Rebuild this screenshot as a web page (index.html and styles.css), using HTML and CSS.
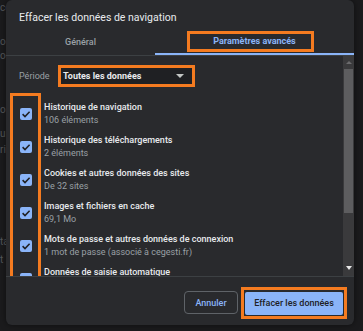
FILE: index.html
```html
<!DOCTYPE html>
<html lang="fr">

<head>
    <meta charset="UTF-8">
    <meta name="viewport" content="width=device-width, initial-scale=1.0">
    <title>Effacer les données de navigation</title>
    <link rel="stylesheet" href="styles.css">
</head>

<body>
    <div class="page">
        <!-- settings page behind the dialog -->
        <div class="behind">
            <p class="behind-line l1">cc</p>
            <p class="behind-line l2">oc</p>
            <p class="behind-line l3">oc</p>
            <p class="behind-line l4">ok</p>
            <p class="behind-line l5">u</p>
            <p class="behind-line l6">rio</p>
            <p class="behind-line l7">ta</p>
            <p class="behind-line l8">t</p>
        </div>

        <div class="dialog">
            <h1 class="dialog-title">Effacer les données de navigation</h1>

            <div class="tabs">
                <div class="tab tab-basic">Général</div>
                <div class="tab tab-advanced active">
                    <span class="highlight tab-mark">Paramètres avancés</span>
                </div>
            </div>

            <div class="dialog-body">
                <div class="scroll-area">
                    <div class="period">
                        <span class="period-label">Période</span>
                        <div class="highlight select-box">
                            <span>Toutes les données</span>
                            <span class="select-arrow"></span>
                        </div>
                    </div>

                    <div class="options">
                        <div class="highlight checks">
                            <div class="check-cell"><span class="checkbox"><svg viewBox="0 0 12 12"><path d="M2.6 6.2 L5 8.5 L9.6 3.8" /></svg></span></div>
                            <div class="check-cell"><span class="checkbox"><svg viewBox="0 0 12 12"><path d="M2.6 6.2 L5 8.5 L9.6 3.8" /></svg></span></div>
                            <div class="check-cell"><span class="checkbox"><svg viewBox="0 0 12 12"><path d="M2.6 6.2 L5 8.5 L9.6 3.8" /></svg></span></div>
                            <div class="check-cell"><span class="checkbox"><svg viewBox="0 0 12 12"><path d="M2.6 6.2 L5 8.5 L9.6 3.8" /></svg></span></div>
                            <div class="check-cell"><span class="checkbox"><svg viewBox="0 0 12 12"><path d="M2.6 6.2 L5 8.5 L9.6 3.8" /></svg></span></div>
                            <div class="check-cell"><span class="checkbox"><svg viewBox="0 0 12 12"><path d="M2.6 6.2 L5 8.5 L9.6 3.8" /></svg></span></div>
                        </div>

                        <div class="labels">
                            <div class="option">
                                <p class="option-title">Historique de navigation</p>
                                <p class="option-sub">106 éléments</p>
                            </div>
                            <div class="option">
                                <p class="option-title">Historique des téléchargements</p>
                                <p class="option-sub">2 éléments</p>
                            </div>
                            <div class="option">
                                <p class="option-title">Cookies et autres données des sites</p>
                                <p class="option-sub">De 32 sites</p>
                            </div>
                            <div class="option">
                                <p class="option-title">Images et fichiers en cache</p>
                                <p class="option-sub">69,1 Mo</p>
                            </div>
                            <div class="option">
                                <p class="option-title">Mots de passe et autres données de connexion</p>
                                <p class="option-sub">1 mot de passe (associé à cegesti.fr)</p>
                            </div>
                            <div class="option">
                                <p class="option-title">Données de saisie automatique</p>
                            </div>
                        </div>
                    </div>
                </div>

                <div class="scrollbar">
                    <span class="arrow arrow-up"></span>
                    <div class="track">
                        <div class="thumb"></div>
                    </div>
                    <span class="arrow arrow-down"></span>
                </div>
            </div>

            <div class="dialog-footer">
                <button class="cancel-btn">Annuler</button>
                <div class="highlight confirm-wrap">
                    <button class="confirm-btn">Effacer les données</button>
                </div>
            </div>
        </div>
    </div>
</body>

</html>
```

FILE: styles.css
```css
/* Reset */
* {
    margin: 0;
    padding: 0;
    box-sizing: border-box;
}

body {
    font-family: 'Roboto', 'Liberation Sans', sans-serif;
    background-color: #1b1b1d;
    color: #e8eaed;
    width: 363px;
    height: 331px;
    overflow: hidden;
}

.page {
    position: relative;
    width: 363px;
    height: 331px;
}

/* Faint settings page behind */
.behind {
    display: flex;
    flex-direction: column;
}

.behind-line {
    font-size: 10px;
    line-height: 12px;
    color: #55575a;
    white-space: nowrap;
}

.l1 { margin-top: 2px; }
.l2 { margin-top: 22px; }
.l3 { margin-top: 2px; }
.l4 { margin-top: 42px; }
.l5 { margin-top: 12px; }
.l6 { margin-top: 4px; }
.l7 { margin-top: 80px; }
.l8 { margin-top: 6px; }

/* Orange annotation frames */
.highlight {
    border: 3px solid #f47b20;
}

/* Dialog */
.dialog {
    position: absolute;
    top: 0;
    left: 6px;
    width: 348px;
    height: 325px;
    background-color: #292a2d;
    border-radius: 6px;
    display: flex;
    flex-direction: column;
    overflow: hidden;
    box-shadow: 0 0 6px rgba(0, 0, 0, 0.5);
}

.dialog-title {
    font-size: 10.5px;
    font-weight: normal;
    line-height: 16px;
    padding: 10px 13px 0;
    height: 25px;
    color: #e8eaed;
}

/* Tabs */
.tabs {
    display: flex;
    height: 31px;
    border-bottom: 1px solid #3c4043;
}

.tab {
    display: flex;
    justify-content: center;
    align-items: flex-start;
    padding-top: 6px;
    font-size: 9px;
    font-weight: 500;
    line-height: 15px;
    color: #9aa0a6;
}

.tab-basic {
    width: 149px;
    padding-top: 10px;
}

.tab-advanced {
    flex: 1;
    border-bottom: 2px solid #8ab4f8;
}

.tab.active {
    color: #8ab4f8;
    font-weight: bold;
}

.tab-mark {
    height: 21px;
    padding: 0 15px 0 23px;
    margin-right: 8px;
}

/* Body */
.dialog-body {
    display: flex;
    height: 221px;
    border-bottom: 1px solid #3c4043;
}

.scroll-area {
    flex: 1;
    overflow: hidden;
}

.period {
    display: flex;
    align-items: center;
    padding: 9px 0 0 13px;
}

.period-label {
    font-size: 9px;
    color: #9aa0a6;
    width: 39px;
}

.select-box {
    width: 137px;
    height: 22px;
    background-color: #1f2023;
    display: flex;
    align-items: center;
    justify-content: space-between;
    padding: 0 8px 0 2px;
    font-size: 9px;
    font-weight: bold;
    color: #e8eaed;
}

.select-arrow {
    width: 0;
    height: 0;
    border-left: 4px solid transparent;
    border-right: 4px solid transparent;
    border-top: 4px solid #c4c7c5;
}

/* Options */
.options {
    display: flex;
    margin-top: 6px;
}

.checks {
    margin-left: 4px;
    width: 31px;
    height: 190px;
    padding-top: 1px;
    display: flex;
    flex-direction: column;
    align-items: center;
}

.check-cell {
    height: 33px;
    flex-shrink: 0;
    display: flex;
    align-items: center;
    justify-content: center;
}

.checkbox {
    width: 12px;
    height: 12px;
    border-radius: 2px;
    background-color: #8ab4f8;
    display: flex;
}

.checkbox svg {
    width: 12px;
    height: 12px;
    fill: none;
    stroke: #202124;
    stroke-width: 1.6;
}

.labels {
    padding-left: 3px;
    padding-top: 1px;
}

.option {
    height: 33px;
    padding-top: 7px;
    display: flex;
    flex-direction: column;
}

.option-title {
    font-size: 9px;
    line-height: 13px;
    font-weight: 500;
    color: #e8eaed;
    white-space: nowrap;
}

.option-sub {
    font-size: 9px;
    line-height: 13px;
    color: #9aa0a6;
    white-space: nowrap;
}

/* Scrollbar */
.scrollbar {
    width: 11px;
    background-color: #3a3a3c;
    display: flex;
    flex-direction: column;
    align-items: center;
    padding: 3px 0;
}

.arrow {
    width: 0;
    height: 0;
    border-left: 3px solid transparent;
    border-right: 3px solid transparent;
}

.arrow-up {
    border-bottom: 3px solid #6b6b6d;
    margin-top: 2px;
}

.arrow-down {
    border-top: 4px solid #e8e8e8;
    margin-bottom: 3px;
}

.track {
    flex: 1;
    width: 100%;
    padding: 5px 1px 0;
}

.thumb {
    height: 144px;
    background-color: #5d5d5f;
}

/* Footer */
.dialog-footer {
    display: flex;
    justify-content: flex-end;
    align-items: center;
    gap: 3px;
    padding: 10px 7px 6px 0;
}

.cancel-btn,
.confirm-btn {
    height: 23px;
    font-family: inherit;
    font-size: 9px;
    font-weight: 500;
    border-radius: 4px;
    cursor: pointer;
}

.cancel-btn {
    width: 54px;
    background-color: transparent;
    color: #8ab4f8;
    border: 1px solid #5f6368;
}

.confirm-wrap {
    padding: 1px;
    background-color: #292a2d;
}

.confirm-btn {
    width: 98px;
    background-color: #8ab4f8;
    color: #202124;
    border: none;
    border-radius: 2px;
}
```
